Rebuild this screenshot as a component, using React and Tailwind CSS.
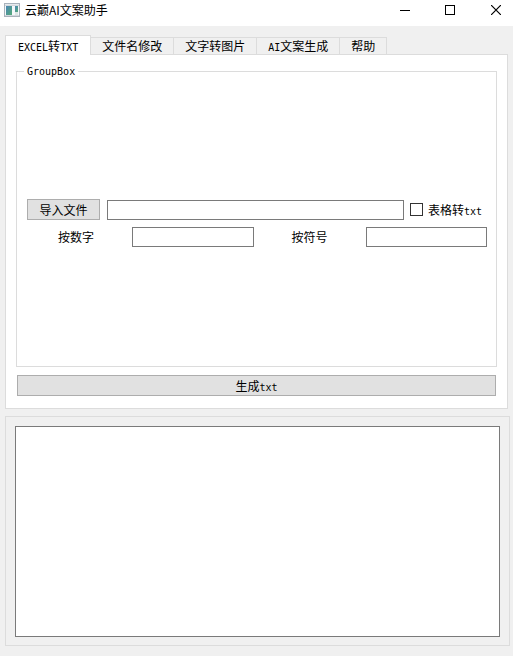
import React, { useState } from 'react';

const TABS = [
  { id: 'excel', label: <><Latin>EXCEL</Latin>转<Latin>TXT</Latin></> },
  { id: 'rename', label: '文件名修改' },
  { id: 'image', label: '文字转图片' },
  { id: 'ai', label: <><Latin>AI</Latin>文案生成</> },
  { id: 'help', label: '帮助' },
];

const inputClass = 'h-5 w-full min-w-0 border border-[#7a7a7a] bg-white px-1 outline-none focus:border-[#0078d7]';
const buttonClass = 'h-[21px] border border-[#adadad] bg-[#e1e1e1] hover:border-[#0078d7] hover:bg-[#e5f1fb]';

// Half-width letters, 6px each, next to the 12px Chinese glyphs
function Latin({ children }) {
  return <span className="font-['DejaVu_Sans_Mono','Liberation_Mono',monospace] text-[10px] leading-none">{children}</span>;
}

const AppIcon = () => (
  <svg width="16" height="14" viewBox="0 0 16 14" shapeRendering="crispEdges" aria-hidden="true">
    <defs>
      <linearGradient id="screen" x1="0" y1="0" x2="1" y2="1">
        <stop offset="0" stopColor="#4c86b4" />
        <stop offset="1" stopColor="#55ab79" />
      </linearGradient>
    </defs>
    <rect width="16" height="14" fill="#d3d8dd" />
    <rect x="0.5" y="0.5" width="15" height="13" fill="none" stroke="#a9b2bb" />
    <rect x="1" y="1" width="14" height="1" fill="#e6eaed" />
    <rect x="1" y="3" width="14" height="9" fill="#f5f8fa" />
    <rect x="2" y="3" width="6" height="9" fill="url(#screen)" />
    <rect x="11" y="3" width="3" height="6" fill="url(#screen)" />
    <rect x="11" y="9" width="3" height="3" fill="#dce6e4" />
  </svg>
);

const TitleBar = () => (
  <header className="flex h-[26px] items-start justify-between bg-white pl-1">
    <div className="flex items-center gap-[5px] pt-[2px]">
      <AppIcon />
      <h1 className="text-[12px] leading-[16px]">云巅AI文案助手</h1>
    </div>
    <div className="flex">
      <button type="button" aria-label="最小化" className="flex h-5 w-[45px] items-center justify-center">
        <svg width="10" height="10" viewBox="0 0 10 10" fill="none" stroke="black" shapeRendering="crispEdges">
          <path d="M0 5.5h10" />
        </svg>
      </button>
      <button type="button" aria-label="最大化" className="flex h-5 w-[45px] items-center justify-center">
        <svg width="10" height="10" viewBox="0 0 10 10" fill="none" stroke="black" shapeRendering="crispEdges">
          <path d="M.5.5h9v9h-9z" />
        </svg>
      </button>
      <button type="button" aria-label="关闭" className="flex h-5 w-[41px] items-center justify-center pl-[7px]">
        <svg width="10" height="10" viewBox="0 0 10 10" fill="none" stroke="black" strokeWidth="1.2">
          <path d="M0 0l10 10M10 0L0 10" />
        </svg>
      </button>
    </div>
  </header>
);

const ExcelForm = () => (
  <form className="flex flex-col" onSubmit={(e) => e.preventDefault()}>
    <fieldset className="min-w-0 border border-[#dcdcdc] pr-[9px] pl-[7px]">
      <legend className="flex h-3 items-end px-[3px]"><Latin>GroupBox</Latin></legend>
      <div className="flex min-h-[289px] flex-col justify-center gap-[7px] pt-[3px] pl-[3px]">
        <div className="flex items-center">
          <button type="button" className={`${buttonClass} w-[73px] shrink-0`}>导入文件</button>
          <input type="text" aria-label="导入文件" className={`${inputClass} mr-[6px] ml-[7px] flex-1`} />
          <label className="flex shrink-0 items-center gap-[5px] pr-[5px]">
            <input type="checkbox" className="size-[13px] appearance-none border border-[#333333] bg-white checked:bg-[#333333]" />
            <span>表格转<Latin>txt</Latin></span>
          </label>
        </div>
        <div className="grid grid-cols-[98px_1fr_98px_1fr] items-center gap-[7px]">
          <label htmlFor="by-number" className="text-center">按数字</label>
          <input id="by-number" type="text" className={inputClass} />
          <label htmlFor="by-symbol" className="text-center">按符号</label>
          <input id="by-symbol" type="text" className={inputClass} />
        </div>
      </div>
    </fieldset>
    <button type="submit" className={`${buttonClass} mx-px mt-2`}>生成<Latin>txt</Latin></button>
  </form>
);

export default function App() {
  const [active, setActive] = useState('excel');

  return (
    <div className="flex min-h-screen flex-col bg-[#f0f0f0] font-['Noto_Sans_CJK_SC',sans-serif] text-[12px] leading-[16px] text-black">
      <TitleBar />
      <main className="flex flex-1 flex-col pt-[9px] pr-[3px] pb-[10px] pl-[5px]">
        <div role="tablist" className="flex h-5 items-end">
          {TABS.map(({ id, label }) => (
            <button
              key={id}
              type="button"
              role="tab"
              aria-selected={active === id}
              onClick={() => setActive(id)}
              className={
                active === id
                  ? 'z-10 h-5 border border-b-0 border-[#dcdcdc] bg-white px-3'
                  : 'mb-px h-[17px] border-t border-r border-[#dcdcdc] bg-[#f0f0f0] px-[11px]'
              }
            >
              {label}
            </button>
          ))}
        </div>
        <section role="tabpanel" className="-mt-px mr-[2px] min-h-[355px] border border-[#dcdcdc] bg-white px-[10px] pt-[10px] pb-3">
          {active === 'excel' && <ExcelForm />}
        </section>
        <section className="mt-[7px] flex flex-1 flex-col border border-[#dcdcdc] px-[9px] pt-[9px] pb-2">
          <textarea aria-label="输出" className="w-full flex-1 resize-none border border-[#7a7a7a] bg-white p-1 outline-none" />
        </section>
      </main>
    </div>
  );
}
